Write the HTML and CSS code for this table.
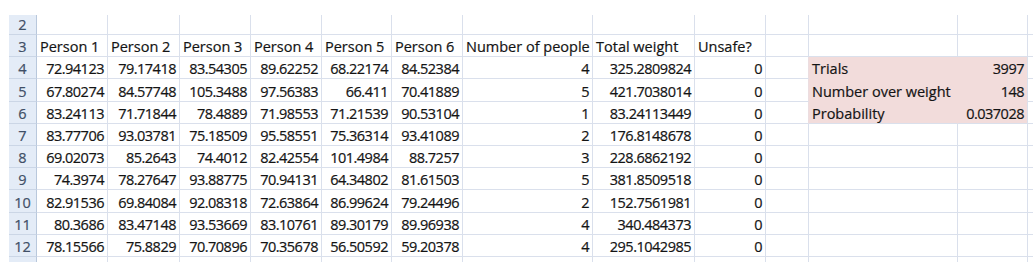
FILE: index.html
```html
<!DOCTYPE html>
<html lang="en">
<head>
<meta charset="utf-8">
<title>Elevator weight simulation</title>
<link rel="stylesheet" href="styles.css">
</head>
<body>
<div class="sheet">
  <div class="grid">
    <div class="row">
      <div class="rh">2</div>
      <div class="c"></div><div class="c"></div><div class="c"></div><div class="c"></div><div class="c"></div><div class="c"></div>
      <div class="c"></div><div class="c"></div><div class="c"></div><div class="c"></div><div class="c"></div><div class="c"></div><div class="c"></div>
    </div>
    <div class="row">
      <div class="rh">3</div>
      <div class="c t">Person 1</div><div class="c t">Person 2</div><div class="c t">Person 3</div><div class="c t">Person 4</div><div class="c t">Person 5</div><div class="c t">Person 6</div>
      <div class="c t">Number of people</div><div class="c t">Total weight</div><div class="c t">Unsafe?</div><div class="c"></div><div class="c"></div><div class="c"></div><div class="c"></div>
    </div>
    <div class="row">
      <div class="rh">4</div>
      <div class="c n">72.94123</div><div class="c n">79.17418</div><div class="c n">83.54305</div><div class="c n">89.62252</div><div class="c n">68.22174</div><div class="c n">84.52384</div>
      <div class="c n">4</div><div class="c n">325.2809824</div><div class="c n">0</div><div class="c pre"></div><div class="c t hl">Trials</div><div class="c n hl hv">3997</div><div class="c"></div>
    </div>
    <div class="row">
      <div class="rh">5</div>
      <div class="c n">67.80274</div><div class="c n">84.57748</div><div class="c n">105.3488</div><div class="c n">97.56383</div><div class="c n">66.411</div><div class="c n">70.41889</div>
      <div class="c n">5</div><div class="c n">421.7038014</div><div class="c n">0</div><div class="c pre"></div><div class="c t hl">Number over weight</div><div class="c n hl hv">148</div><div class="c"></div>
    </div>
    <div class="row">
      <div class="rh">6</div>
      <div class="c n">83.24113</div><div class="c n">71.71844</div><div class="c n">78.4889</div><div class="c n">71.98553</div><div class="c n">71.21539</div><div class="c n">90.53104</div>
      <div class="c n">1</div><div class="c n">83.24113449</div><div class="c n">0</div><div class="c pre"></div><div class="c t hl last">Probability</div><div class="c n hl hv last">0.037028</div><div class="c"></div>
    </div>
    <div class="row">
      <div class="rh">7</div>
      <div class="c n">83.77706</div><div class="c n">93.03781</div><div class="c n">75.18509</div><div class="c n">95.58551</div><div class="c n">75.36314</div><div class="c n">93.41089</div>
      <div class="c n">2</div><div class="c n">176.8148678</div><div class="c n">0</div><div class="c"></div><div class="c"></div><div class="c"></div><div class="c"></div>
    </div>
    <div class="row">
      <div class="rh">8</div>
      <div class="c n">69.02073</div><div class="c n">85.2643</div><div class="c n">74.4012</div><div class="c n">82.42554</div><div class="c n">101.4984</div><div class="c n">88.7257</div>
      <div class="c n">3</div><div class="c n">228.6862192</div><div class="c n">0</div><div class="c"></div><div class="c"></div><div class="c"></div><div class="c"></div>
    </div>
    <div class="row">
      <div class="rh">9</div>
      <div class="c n">74.3974</div><div class="c n">78.27647</div><div class="c n">93.88775</div><div class="c n">70.94131</div><div class="c n">64.34802</div><div class="c n">81.61503</div>
      <div class="c n">5</div><div class="c n">381.8509518</div><div class="c n">0</div><div class="c"></div><div class="c"></div><div class="c"></div><div class="c"></div>
    </div>
    <div class="row">
      <div class="rh">10</div>
      <div class="c n">82.91536</div><div class="c n">69.84084</div><div class="c n">92.08318</div><div class="c n">72.63864</div><div class="c n">86.99624</div><div class="c n">79.24496</div>
      <div class="c n">2</div><div class="c n">152.7561981</div><div class="c n">0</div><div class="c"></div><div class="c"></div><div class="c"></div><div class="c"></div>
    </div>
    <div class="row">
      <div class="rh">11</div>
      <div class="c n">80.3686</div><div class="c n">83.47148</div><div class="c n">93.53669</div><div class="c n">83.10761</div><div class="c n">89.30179</div><div class="c n">89.96938</div>
      <div class="c n">4</div><div class="c n">340.484373</div><div class="c n">0</div><div class="c"></div><div class="c"></div><div class="c"></div><div class="c"></div>
    </div>
    <div class="row">
      <div class="rh">12</div>
      <div class="c n">78.15566</div><div class="c n">75.8829</div><div class="c n">70.70896</div><div class="c n">70.35678</div><div class="c n">56.50592</div><div class="c n">59.20378</div>
      <div class="c n">4</div><div class="c n">295.1042985</div><div class="c n">0</div><div class="c"></div><div class="c"></div><div class="c"></div><div class="c"></div>
    </div>
    <div class="row">
      <div class="rh"></div>
      <div class="c"></div><div class="c"></div><div class="c"></div><div class="c"></div><div class="c"></div><div class="c"></div>
      <div class="c"></div><div class="c"></div><div class="c"></div><div class="c"></div><div class="c"></div><div class="c"></div><div class="c"></div>
    </div>
  </div>
</div>
</body>
</html>
```
FILE: styles.css
```css
html, body {
  margin: 0;
  padding: 0;
  background: #ffffff;
  overflow: hidden;
}

body {
  font-family: "Open Sans", "Noto Sans", sans-serif;
  font-size: 14.5px;
  color: #141414;
}

.sheet {
  padding: 15px 0 0 9px;
  height: 247px;
  overflow: hidden;
}

.grid {
  display: grid;
  grid-template-columns: 28px 71px 72px 71px 71px 70px 71px 130px 102px 71px 43px 149px 70px 64px;
  grid-template-rows: 20px repeat(10, 22.2px) 22px;
  width: max-content;
}

.row {
  display: contents;
}

.rh,
.c {
  box-sizing: border-box;
  display: flex;
  align-items: flex-end;
  line-height: 16px;
  padding: 0 3px 1px 3px;
  white-space: nowrap;
  overflow: hidden;
  -webkit-text-stroke: 0.2px currentColor;
}

.rh {
  justify-content: center;
  background: #e4ecf7;
  color: #3f4f66;
  border-right: 1px solid #b9c8dc;
  border-bottom: 1px solid #cbd6e6;
  padding: 0 0 1px 0;
}

.c {
  border-right: 1px solid #dae0ec;
  border-bottom: 1px solid #dae0ec;
}

.t {
  justify-content: flex-start;
}

.n {
  justify-content: flex-end;
  letter-spacing: -0.5px;
}

.hl {
  background: #f2dcdb;
  border-bottom-color: #f2dcdb;
  border-right-color: #f2dcdb;
}

.hl.hv {
  border-right-color: #dae0ec;
}

.hl.last {
  border-bottom-color: #dae0ec;
}

.pre {
  border-right-color: #ecdde0;
}
```
